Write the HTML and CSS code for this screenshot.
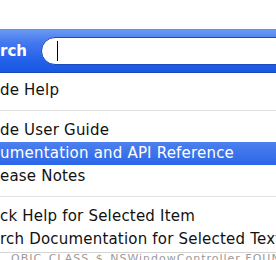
FILE: index.html
```html
<!doctype html>
<html lang="en">

<head>
  <meta charset="UTF-8" />
  <title>Help Menu</title>
  <link rel="stylesheet" href="styles.css">
</head>

<body>
  <div class="menu">
    <div class="search-bar">
      <span class="search-label">rch</span>
      <div class="search-field"><span class="caret"></span></div>
    </div>

    <div class="items">
      <div class="item">de Help</div>
      <div class="separator"></div>
      <div class="item">de User Guide</div>
      <div class="item selected">umentation and API Reference</div>
      <div class="item">ease Notes</div>
      <div class="separator"></div>
      <div class="item">ck Help for Selected Item</div>
      <div class="item">rch Documentation for Selected Text</div>
    </div>

    <div class="behind">_ OBJC_CLASS_$_NSWindowController FOUNDATION</div>
  </div>
</body>

</html>
```

FILE: styles.css
```css
body {
  margin: 0;
  background: #fff;
  font-family: "DejaVu Sans", sans-serif;
  overflow: hidden;
}

.menu {
  width: 276px;
  height: 260px;
  padding-top: 29px;
  box-sizing: border-box;
  overflow: hidden;
}

.search-bar {
  height: 42px;
  display: flex;
  align-items: center;
  border-top: 1px solid #8c8c8c;
  border-bottom: 1px solid #1a48b4;
  background: linear-gradient(to bottom, #6a98f2 0%, #4479ee 30%, #2462ea 70%, #1a58e4 100%);
}

.search-label {
  color: #fff;
  font-weight: bold;
  font-size: 15px;
  width: 41px;
}

.search-field {
  flex: 1;
  height: 26px;
  margin-right: -20px;
  background: #fff;
  border: 1px solid #1c4cba;
  border-radius: 14px;
  display: flex;
  align-items: center;
  padding-left: 15px;
}

.caret {
  width: 1px;
  height: 20px;
  background: #000;
}

.items {
  padding-top: 6px;
}

.item {
  height: 23px;
  line-height: 23px;
  font-size: 15px;
  letter-spacing: 0.2px;
  color: #111;
  white-space: nowrap;
}

.item.selected {
  color: #fff;
  background: linear-gradient(to bottom, #4d80ee 0%, #2c66e8 100%);
}

.separator {
  height: 1px;
  margin: 8px 0;
  background: #e2e2e2;
}

.behind {
  margin-top: 1px;
  border-top: 1px solid #d4d4d4;
  font-size: 11px;
  line-height: 12px;
  color: #9a9a9a;
  white-space: nowrap;
  letter-spacing: 1px;
}
```
